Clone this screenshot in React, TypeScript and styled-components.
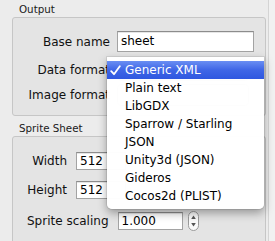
import React from "react";
import styled, { createGlobalStyle } from "styled-components";

const Global = createGlobalStyle`
  html, body { margin: 0; padding: 0; background: #ececec; }
  body { font-family: "DejaVu Sans", "Liberation Sans", sans-serif; color: #111; }
`;

const Window = styled.div`
  position: relative;
  width: 275px;
  height: 241px;
  overflow: hidden;
  box-sizing: border-box;
  padding: 1px 0 0 12px;
  background: #ececec;
`;

const EdgeStrip = styled.div`
  position: absolute;
  top: 0;
  bottom: 0;
  left: 268px;
  width: 7px;
  border-left: 1px solid #d4d4d4;
  background: #f1f1f1;
`;

const Title = styled.div`
  height: 16px;
  line-height: 16px;
  padding-left: 7px;
  font-size: 10.3px;
  color: #1a1a1a;
  margin-top: ${(p: { $mt?: number }) => p.$mt ?? 0}px;
`;

const Group = styled.div<{ $pt: number; $pb: number; $h?: number }>`
  width: 254px;
  box-sizing: border-box;
  border: 1px solid #c6c6c6;
  border-radius: 3px;
  background: #e4e4e4;
  padding: ${(p) => p.$pt}px 10px ${(p) => p.$pb}px 0;
  ${(p) => (p.$h ? `height: ${p.$h}px;` : "")}
`;

const Row = styled.div<{ $h: number; $mt?: number }>`
  display: flex;
  align-items: center;
  height: ${(p) => p.$h}px;
  margin-top: ${(p) => p.$mt ?? 0}px;
`;

const Label = styled.div<{ $w?: number; $ml?: number; $gap: number }>`
  ${(p) => (p.$w ? `width: ${p.$w}px; text-align: right;` : "")}
  margin-left: ${(p) => p.$ml ?? 0}px;
  margin-right: ${(p) => p.$gap}px;
  font-size: 12px;
  white-space: nowrap;
  flex-shrink: 0;
`;

const Field = styled.div<{ $w: number; $h: number }>`
  width: ${(p) => p.$w}px;
  height: ${(p) => p.$h}px;
  box-sizing: border-box;
  border: 1px solid #a3a3a3;
  border-top-color: #8c8c8c;
  background: #fff;
  box-shadow: inset 0 1px 0 #e6e6e6;
  font-size: 12px;
  line-height: ${(p) => p.$h - 2}px;
  padding-left: 3px;
  color: #000;
`;

const Popup = styled.div`
  width: 130px;
  height: 20px;
  border-radius: 4px;
  background: #f6f6f6;
  border: 1px solid #a8a8a8;
`;

const Stepper = styled.div`
  margin-left: 5px;
  width: 11px;
  height: 20px;
  display: flex;
`;

const Menu = styled.div`
  position: absolute;
  left: 107px;
  top: 57px;
  width: 157px;
  padding: 4px 0;
  background: rgba(255, 255, 255, 0.98);
  border-radius: 0 0 5px 5px;
  box-shadow: 0 4px 10px rgba(0, 0, 0, 0.35), 0 0 0 1px rgba(0, 0, 0, 0.08);
`;

const Item = styled.div<{ $sel?: boolean }>`
  position: relative;
  height: 18px;
  line-height: 18px;
  padding-left: 18px;
  font-size: 12px;
  white-space: nowrap;
  color: ${(p) => (p.$sel ? "#fff" : "#000")};
  background: ${(p) =>
    p.$sel ? "linear-gradient(#6a8ef3, #3f66e6 50%, #2f58e0)" : "transparent"};
`;

const Check = styled.svg`
  position: absolute;
  left: 3px;
  top: 4px;
`;

const items = [
  "Generic XML",
  "Plain text",
  "LibGDX",
  "Sparrow / Starling",
  "JSON",
  "Unity3d (JSON)",
  "Gideros",
  "Cocos2d (PLIST)",
];

export default function App() {
  return (
    <>
      <Global />
      <Window>
        <EdgeStrip />
        <Title>Output</Title>
        <Group $pt={13} $pb={10}>
          <Row $h={21}>
            <Label $w={97} $gap={7}>Base name</Label>
            <Field $w={137} $h={21}>sheet</Field>
          </Row>
          <Row $h={21} $mt={7}>
            <Label $w={97} $gap={7}>Data format</Label>
            <Popup />
          </Row>
          <Row $h={21} $mt={4}>
            <Label $w={97} $gap={7}>Image format</Label>
            <Popup />
          </Row>
        </Group>
        <Title $mt={4}>Sprite Sheet</Title>
        <Group $pt={15} $pb={10} $h={120}>
          <Row $h={18}>
            <Label $w={54} $gap={9}>Width</Label>
            <Field $w={50} $h={18}>512</Field>
          </Row>
          <Row $h={18} $mt={11}>
            <Label $w={54} $gap={9}>Height</Label>
            <Field $w={50} $h={18}>512</Field>
          </Row>
          <Row $h={18} $mt={13}>
            <Label $ml={14} $gap={9}>Sprite scaling</Label>
            <Field $w={65} $h={18}>1.000</Field>
            <Stepper>
              <svg width="11" height="20" viewBox="0 0 11 20">
                <rect x="0.5" y="0.5" width="10" height="19" rx="5" fill="#fafafa" stroke="#9a9a9a" />
                <path d="M3.2 8 L5.5 4.6 L7.8 8 Z" fill="#555" />
                <path d="M3.2 12 L5.5 15.4 L7.8 12 Z" fill="#555" />
              </svg>
            </Stepper>
          </Row>
        </Group>
        <Menu>
          {items.map((t, i) => (
            <Item key={t} $sel={i === 0}>
              {i === 0 && (
                <Check width="11" height="11" viewBox="0 0 11 11">
                  <path d="M1.2 6.2 L4 9.2 L9.8 1.2" fill="none" stroke="#fff" strokeWidth="1.8" strokeLinecap="round" strokeLinejoin="round" />
                </Check>
              )}
              {t}
            </Item>
          ))}
        </Menu>
      </Window>
    </>
  );
}
